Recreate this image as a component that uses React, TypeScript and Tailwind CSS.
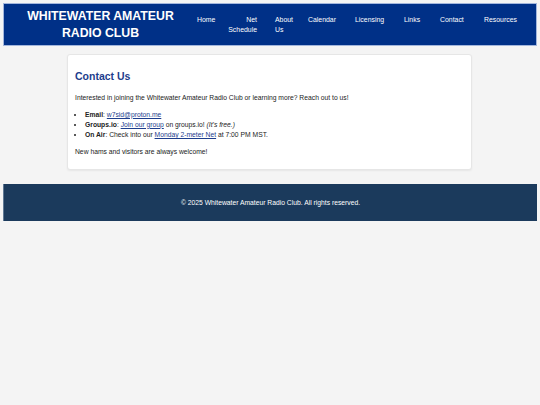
const navItems = [
  { label: "Home", box: "w-[31px]" },
  { label: "Net Schedule", box: "w-[47px]", inner: "w-[29px] text-right" },
  { label: "About Us", box: "w-[33px]", inner: "w-[20px]" },
  { label: "Calendar", box: "w-[47px]" },
  { label: "Licensing", box: "w-[49px]" },
  { label: "Links", box: "w-[36px]" },
  { label: "Contact", box: "w-[44px]" },
  { label: "Resources", box: "w-[40px]" },
]

export default function App() {
  return (
    <div className="min-h-screen bg-[#f4f4f4] px-[3px] pt-[3px] font-['Liberation_Sans',Arial,sans-serif] text-[#222]">
      <header className="flex h-[43px] border border-[#a3b6dc] bg-[#003087]">
        <div className="flex w-[193px] items-center justify-center">
          <h1 className="text-center text-[12.3px] font-bold leading-[17px] text-white">
            WHITEWATER AMATEUR
            <br />
            RADIO CLUB
          </h1>
        </div>
        <nav className="mt-[11px] flex items-start">
          {navItems.map((item) => (
            <div key={item.label} className={item.box}>
              <a href="#" className={`block text-[6.9px] leading-[10px] text-white ${item.inner ?? ""}`}>
                {item.label}
              </a>
            </div>
          ))}
        </nav>
      </header>

      <main className="ml-[64px] mt-[8px] w-[405px] rounded-[3px] border border-[#e6e6e6] bg-white px-[7px] pt-[15px] pb-[12px] shadow-[0_1px_2px_rgba(0,0,0,0.06)]">
        <h2 className="text-[10.5px] font-bold leading-[13px] text-[#1d3d8c]">Contact Us</h2>
        <p className="mt-[9.5px] text-[6.75px] leading-[10px]">
          Interested in joining the Whitewater Amateur Radio Club or learning more? Reach out to us!
        </p>
        <ul className="mt-[7px] list-disc pl-[10px] text-[6.75px] leading-[10.2px]">
          <li>
            <b>Email</b>:{" "}
            <a href="#" className="text-[#1d3d8c] underline">
              w7sid@proton.me
            </a>
          </li>
          <li>
            <b>Groups.io</b>:{" "}
            <a href="#" className="text-[#1d3d8c] underline">
              Join our group
            </a>{" "}
            on groups.io! <i>(It's free.)</i>
          </li>
          <li>
            <b>On Air</b>: Check into our{" "}
            <a href="#" className="text-[#1d3d8c] underline">
              Monday 2-meter Net
            </a>{" "}
            at 7:00 PM MST.
          </li>
        </ul>
        <p className="mt-[7px] text-[6.75px] leading-[10px]">New hams and visitors are always welcome!</p>
      </main>

      <footer className="mt-[14px] flex h-[37px] items-center justify-center border-l border-[#5f7894] bg-[#1b3a5c]">
        <p className="text-[6.75px] text-white">© 2025 Whitewater Amateur Radio Club. All rights reserved.</p>
      </footer>
    </div>
  )
}
